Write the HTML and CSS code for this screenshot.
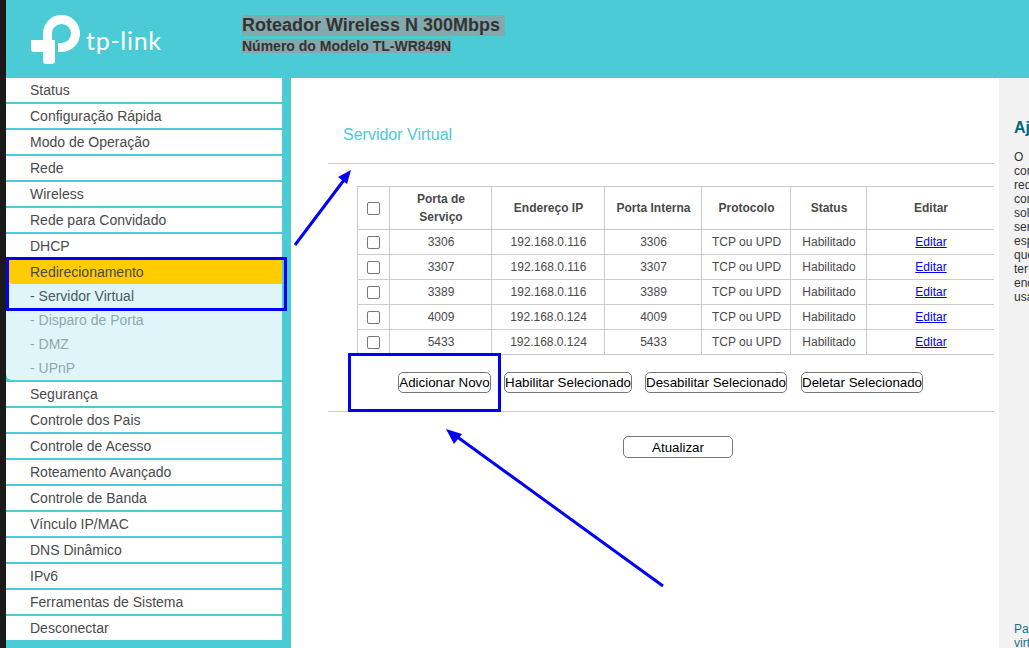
FILE: index.html
```html
<!DOCTYPE html>
<html>
<head>
    <meta charset="UTF-8">
    <meta name="viewport" content="width=device-width, initial-scale=1.0">
    <title>Servidor Virtual</title>
    <link rel="stylesheet" href="styles.css">
</head>
<body>
    <div id="page">
        <div id="header">
            <div class="logo">
                <svg class="logo-icon" width="50" height="50" viewBox="0 0 50 50">
                    <path fill="none" stroke="#fff" stroke-width="9" d="M16.5 26 V18.5 A14 14 0 1 1 30.5 32.5 H27"/>
                    <path fill="#fff" d="M0 25 H24 V46 Q24 49 21 49 H15 Q12 49 12 46 V37 H3 Q0 37 0 34 Z"/>
                </svg>
                <span class="logo-text">tp-link</span>
            </div>
            <div class="model">
                <div class="model-row"><span class="model-name">Roteador Wireless N 300Mbps&nbsp;</span></div>
                <div class="model-row"><span class="model-num">Número do Modelo TL-WR849N</span></div>
            </div>
        </div>
        <div id="main">
            <div id="menu">
                <a class="item">Status</a>
                <a class="item">Configuração Rápida</a>
                <a class="item">Modo de Operação</a>
                <a class="item">Rede</a>
                <a class="item">Wireless</a>
                <a class="item">Rede para Convidado</a>
                <a class="item">DHCP</a>
                <div class="group">
                    <a class="item active">Redirecionamento</a>
                    <a class="sub current">- Servidor Virtual</a>
                    <a class="sub">- Disparo de Porta</a>
                    <a class="sub">- DMZ</a>
                    <a class="sub">- UPnP</a>
                </div>
                <a class="item">Segurança</a>
                <a class="item">Controle dos Pais</a>
                <a class="item">Controle de Acesso</a>
                <a class="item">Roteamento Avançado</a>
                <a class="item">Controle de Banda</a>
                <a class="item">Vínculo IP/MAC</a>
                <a class="item">DNS Dinâmico</a>
                <a class="item">IPv6</a>
                <a class="item">Ferramentas de Sistema</a>
                <a class="item">Desconectar</a>
            </div>
            <div id="content">
                <h2 class="title">Servidor Virtual</h2>
                <div class="line"></div>
                <table id="rules">
                    <tr>
                        <th class="col-check"><span class="check"></span></th>
                        <th class="col-port">Porta de<br>Serviço</th>
                        <th class="col-ip">Endereço IP</th>
                        <th class="col-inner">Porta Interna</th>
                        <th class="col-proto">Protocolo</th>
                        <th class="col-status">Status</th>
                        <th class="col-edit">Editar</th>
                    </tr>
                    <tr>
                        <td><span class="check"></span></td><td>3306</td><td>192.168.0.116</td><td>3306</td><td>TCP ou UPD</td><td>Habilitado</td><td><a href="#">Editar</a></td>
                    </tr>
                    <tr>
                        <td><span class="check"></span></td><td>3307</td><td>192.168.0.116</td><td>3307</td><td>TCP ou UPD</td><td>Habilitado</td><td><a href="#">Editar</a></td>
                    </tr>
                    <tr>
                        <td><span class="check"></span></td><td>3389</td><td>192.168.0.116</td><td>3389</td><td>TCP ou UPD</td><td>Habilitado</td><td><a href="#">Editar</a></td>
                    </tr>
                    <tr>
                        <td><span class="check"></span></td><td>4009</td><td>192.168.0.124</td><td>4009</td><td>TCP ou UPD</td><td>Habilitado</td><td><a href="#">Editar</a></td>
                    </tr>
                    <tr>
                        <td><span class="check"></span></td><td>5433</td><td>192.168.0.124</td><td>5433</td><td>TCP ou UPD</td><td>Habilitado</td><td><a href="#">Editar</a></td>
                    </tr>
                </table>
                <div class="actions">
                    <button class="btn btn-add">Adicionar Novo</button>
                    <button class="btn btn-on">Habilitar Selecionado</button>
                    <button class="btn btn-off">Desabilitar Selecionado</button>
                    <button class="btn btn-del">Deletar Selecionado</button>
                </div>
                <div class="line"></div>
                <div class="refresh">
                    <button class="btn btn-refresh">Atualizar</button>
                </div>
            </div>
            <div id="help">
                <h3>Ajuda do Servidor Virtual</h3>
                <p class="help-text">O &nbsp; &nbsp; &nbsp; &nbsp; &nbsp; &nbsp; Servidor Virtual pode ser<br>configurar serviços públicos<br>rede local, como DNS, e-mail<br>configurado, as solicitações<br>solicitações externas são<br>servidor definido pelo<br>especificado. Qualquer PC<br>que precisar ser servidor<br>ter um IP estático para o<br>endereço IP não mudar ao<br>usar DHCP.</p>
                <p class="help-more">Para mais informações sobre<br>virtual, consulte o manual.</p>
            </div>
        </div>

        <!-- marcacoes azuis por cima do print -->
        <div class="mark mark-menu"></div>
        <div class="mark mark-add"></div>
        <svg class="arrows" width="1029" height="648" viewBox="0 0 1029 648">
            <line x1="295" y1="245" x2="344" y2="180" stroke="#0000f5" stroke-width="3"/>
            <polygon points="351,170 347,184 338,177" fill="#0000f5"/>
            <line x1="663" y1="586" x2="456" y2="436" stroke="#0000f5" stroke-width="3"/>
            <polygon points="446,429 462,434 454,444" fill="#0000f5"/>
        </svg>
    </div>
</body>
</html>
```

FILE: styles.css
```css
html, body {
    margin: 0;
    padding: 0;
    height: 100%;
    overflow: hidden;
}

body {
    font-family: "Liberation Sans", Arial, sans-serif;
    color: #4a4a4a;
    background-color: #1a1a1a;
}

#page {
    position: relative;
    width: 1023px;
    height: 648px;
    margin-left: 6px;
    overflow: hidden;
    background-color: #4acbd6;
}

/* Header */
#header {
    height: 78px;
    display: flex;
    background-color: #4acbd6;
}

.logo {
    width: 236px;
    padding: 15px 0 0 25px;
    box-sizing: border-box;
    display: flex;
    align-items: flex-start;
}

.logo-icon {
    flex-shrink: 0;
}

.logo-text {
    font-family: Lato, sans-serif;
    font-size: 25px;
    line-height: 32px;
    letter-spacing: 0.7px;
    color: #fff;
    margin: 9px 0 0 5px;
}

.model {
    padding-top: 15px;
    font-weight: bold;
    color: #333;
}

.model-row {
    display: flex;
}

.model-name {
    font-size: 18px;
    line-height: 21px;
    background-color: #83a9ad;
    margin-bottom: 3px;
}

.model-num {
    font-size: 14px;
    line-height: 14px;
    background-color: #83a9ad;
}

#main {
    display: flex;
    height: 570px;
}

/* Menu */
#menu {
    width: 276px;
    margin-right: 9px;
    flex-shrink: 0;
    display: flex;
    flex-direction: column;
    gap: 2px;
}

.item, .sub {
    display: block;
    height: 24px;
    line-height: 24px;
    padding-left: 24px;
    font-size: 14px;
    background-color: #fff;
}

.group {
    background-color: #e0f5f8;
    border-bottom-left-radius: 6px;
}

.item.active {
    background-color: #ffcc00;
    border-bottom-left-radius: 6px;
}

.sub {
    background-color: transparent;
    color: #8fa9ad;
}

.sub.current {
    color: #4a5a5e;
}

/* Content */
#content {
    width: 708px;
    flex-shrink: 0;
    background-color: #fff;
    box-sizing: border-box;
    padding: 0 5px 0 37px;
}

.title {
    margin: 0;
    padding: 48px 0 0 15px;
    height: 85px;
    box-sizing: border-box;
    font-size: 16px;
    line-height: 18px;
    font-weight: normal;
    color: #4acbd6;
}

.line {
    height: 1px;
    background-color: #ccc;
}

#rules {
    margin: 22px 0 0 29px;
    width: 637px;
    border-collapse: collapse;
    table-layout: fixed;
    font-size: 12px;
    text-align: center;
}

#rules tr {
    height: 25px;
}

#rules th, #rules td {
    border: 1px solid #ccc;
    padding: 0 0 0 1px;
}

#rules th:first-child, #rules td:first-child {
    padding: 0;
}

#rules th:last-child, #rules td:last-child {
    border-right: none;
}

#rules th {
    height: 42px;
    line-height: 18px;
    font-weight: bold;
}

.col-check { width: 31px; }
.col-port { width: 100px; }
.col-ip { width: 111px; }
.col-inner { width: 95px; }
.col-proto { width: 87px; }
.col-status { width: 74px; }
.col-edit { width: 126px; }

.check {
    display: block;
    width: 11px;
    height: 11px;
    margin: 0 auto;
    border: 1px solid #767676;
    border-radius: 2px;
    background-color: #fff;
}

#rules a {
    color: #0000ee;
    text-decoration: underline;
}

.actions {
    display: flex;
    padding: 17px 0 18px 70px;
    gap: 13px;
}

.btn {
    height: 21px;
    padding: 0;
    font-family: "Liberation Sans", Arial, sans-serif;
    font-size: 13.33px;
    white-space: nowrap;
    color: #000;
    background-color: #fff;
    border: 1px solid #767676;
    border-radius: 5px;
    box-sizing: border-box;
}

.btn-add { width: 93px; }
.btn-on { width: 128px; }
.btn-off { width: 142px; }
.btn-del { width: 122px; margin-left: 1px; }
.btn-refresh { width: 110px; height: 22px; }

.refresh {
    padding: 24px 0 0 295px;
}

/* Help */
#help {
    flex: 1;
    background-color: #f2f2f2;
    padding-left: 15px;
    white-space: nowrap;
    overflow: hidden;
}

#help h3 {
    margin: 0;
    padding-top: 41px;
    font-size: 16px;
    line-height: 18px;
    color: #006a7a;
}

.help-text {
    margin: 13px 0 0;
    font-size: 12px;
    line-height: 14px;
    color: #333;
}

.help-more {
    margin: 318px 0 0;
    font-size: 12px;
    line-height: 14px;
    color: #1a6f8a;
}

/* Blue annotations */
.mark {
    position: absolute;
    box-sizing: border-box;
    border: 3px solid #0000f5;
}

.mark-menu {
    left: 0;
    top: 257px;
    width: 281px;
    height: 54px;
}

.mark-add {
    left: 342px;
    top: 353px;
    width: 153px;
    height: 59px;
}

.arrows {
    position: absolute;
    left: -6px;
    top: 0;
    pointer-events: none;
}
```
